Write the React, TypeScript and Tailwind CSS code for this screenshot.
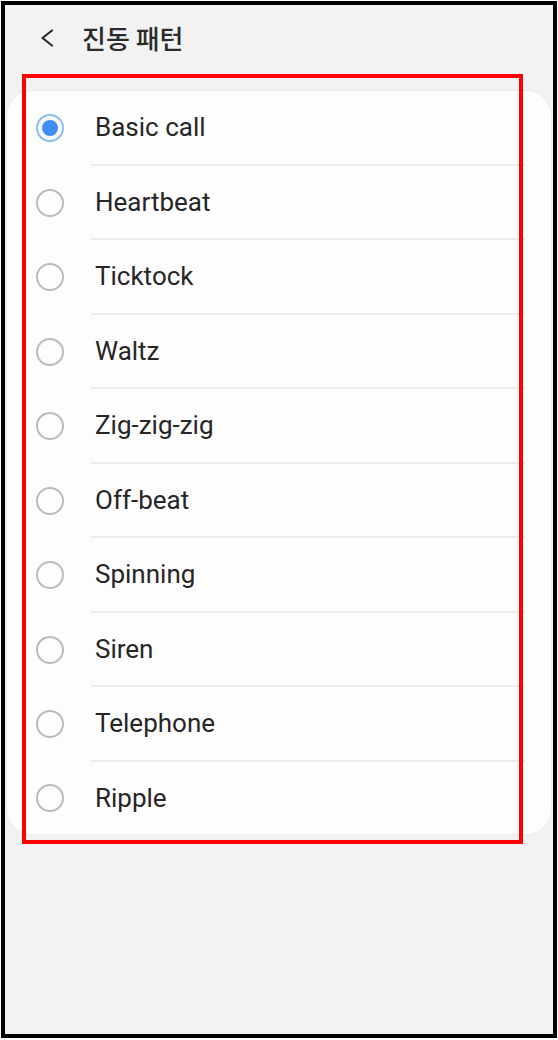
const patterns = [
  'Basic call',
  'Heartbeat',
  'Ticktock',
  'Waltz',
  'Zig-zig-zig',
  'Off-beat',
  'Spinning',
  'Siren',
  'Telephone',
  'Ripple',
];

function Radio({ checked }: { checked: boolean }) {
  if (checked) {
    return (
      <span className="flex items-center justify-center w-[28px] h-[28px] rounded-full border-2 border-[#8dbcf4]">
        <span className="w-[16px] h-[16px] rounded-full bg-[#3f8cf4]" />
      </span>
    );
  }
  return <span className="block w-[28px] h-[28px] rounded-full border-2 border-[#bcbcbc]" />;
}

export default function App() {
  const selected = 'Basic call';

  return (
    <div className="relative w-[558px] h-[1040px] bg-white font-['Roboto','Noto_Sans_CJK_KR',sans-serif]">
      <div className="ml-px mt-px w-[556px] h-[1037px] border-4 border-black bg-[#f2f2f2]">
        <header className="flex items-center h-[66px] pl-[35px]">
          <svg width="14" height="18" viewBox="0 0 14 18" fill="none" className="text-[#2a2a2a]">
            <polyline points="12,1.5 2.5,9 12,16.5" stroke="currentColor" strokeWidth="2.2" strokeLinecap="round" strokeLinejoin="round" />
          </svg>
          <h1 className="ml-[28px] text-[26px] font-medium text-[#2b2b2b] font-['Noto_Sans_CJK_KR',sans-serif] leading-none">
            진동 패턴
          </h1>
        </header>

        <ul className="mt-[19px] mx-px bg-[#fdfdfd] rounded-[26px] border border-[#ececec]">
          {patterns.map((name, i) => {
            const last = i === patterns.length - 1;
            return (
              <li key={name} className={`flex items-center ${last ? 'h-[72px]' : 'h-[74.5px]'}`}>
                <div className="w-[84px] pl-[29px] flex items-center">
                  <Radio checked={name === selected} />
                </div>
                <div
                  className={`flex-1 h-full mr-[26px] flex items-center pl-[4px] ${
                    last ? '' : 'border-b-2 border-[#ececec]'
                  }`}
                >
                  <span className="text-[26px] text-[#262626] leading-none">{name}</span>
                </div>
              </li>
            );
          })}
        </ul>
      </div>

      <div className="absolute left-[22px] top-[73px] w-[501px] h-[770px] border-4 border-[#ff0000]" />
    </div>
  );
}
